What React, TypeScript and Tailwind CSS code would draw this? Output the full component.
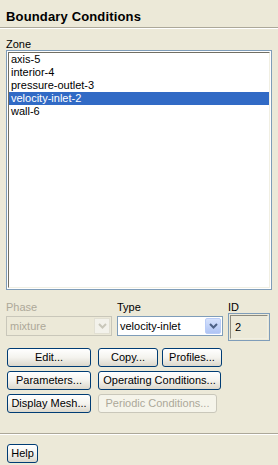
import React from "react";

const zones = ["axis-5", "interior-4", "pressure-outlet-3", "velocity-inlet-2", "wall-6"];

function Chevron({ disabled }: { disabled?: boolean }) {
  return (
    <svg width="9" height="6" viewBox="0 0 9 6">
      <path
        d="M1 1 L4.5 4.5 L8 1"
        fill="none"
        stroke={disabled ? "#C9C7BA" : "#4D6185"}
        strokeWidth="2"
      />
    </svg>
  );
}

function XpButton({ label, w, disabled, className }: { label: string; w: string; disabled?: boolean; className?: string }) {
  return (
    <div
      className={
        "h-[19px] rounded-[3px] border flex items-center justify-center text-[11px] leading-[13px] " +
        w +
        " " +
        (disabled
          ? "border-[#C9C7BA] bg-[#F5F4EA] text-[#ACA899]"
          : "border-[#003C74] bg-linear-to-b from-white via-[#F4F3EE] to-[#DCD8CC] text-black") +
        " " +
        (className ?? "")
      }
    >
      {label}
    </div>
  );
}

export default function App() {
  return (
    <div
      className="w-[278px] h-[465px] bg-[#ECE9D8] flex flex-col overflow-hidden"
      style={{ fontFamily: '"Liberation Sans", Arial, sans-serif' }}
    >
      {/* Header */}
      <div className="pl-[6px] pt-[9px] text-[13px] leading-[16px] font-bold tracking-[0.15px] text-black">Boundary Conditions</div>
      <div className="mt-[2px] h-[2px] border-t border-b border-t-[#ACA899] border-b-white" />

      {/* Zone list */}
      <div className="mt-[9px] pl-[6px] text-[11px] leading-[12px] text-black">Zone</div>
      <div className="ml-[6px] w-[266px] h-[240px] border border-[#7F9DB9] bg-white p-px">
        <div className="h-full border border-t-[#716F64] border-l-[#716F64] border-b-[#F1EFE2] border-r-[#F1EFE2] bg-white">
          {zones.map((z) => (
            <div
              key={z}
              className={
                "h-[13px] pl-[2px] text-[11px] leading-[13px] whitespace-nowrap " +
                (z === "velocity-inlet-2" ? "bg-[#316AC5] text-white" : "text-black")
              }
            >
              {z}
            </div>
          ))}
        </div>
      </div>

      {/* Phase / Type / ID */}
      <div className="mt-[11px] pl-[6px] flex gap-[5px] text-[11px]">
        <div className="w-[106px] flex flex-col">
          <div className="leading-[13px] text-[#ACA899]">Phase</div>
          <div className="mt-[2px] h-[20px] border border-[#C9C7BA] bg-[#ECE9D8] flex items-center">
            <span className="flex-1 pl-[3px] leading-[13px] text-[#ACA899]">mixture</span>
            <div className="w-[16px] h-[16px] mr-px border border-[#E2E0D3] bg-[#F3F2EB] flex items-center justify-center">
              <Chevron disabled />
            </div>
          </div>
        </div>
        <div className="w-[106px] flex flex-col">
          <div className="leading-[13px] text-black">Type</div>
          <div className="mt-[2px] h-[20px] border border-[#7F9DB9] bg-white flex items-center">
            <span className="flex-1 pl-[2px] leading-[13px] text-black">velocity-inlet</span>
            <div className="w-[16px] h-[16px] mr-px rounded-[2px] border border-[#B9CCF7] bg-linear-to-b from-[#D6E2FC] to-[#AFC4F4] flex items-center justify-center">
              <Chevron />
            </div>
          </div>
        </div>
        <div className="w-[42px] flex flex-col">
          <div className="leading-[12px] text-black">ID</div>
          <div className="h-[28px] border border-[#7F9DB9] p-px">
            <div className="h-full border border-t-[#8C8A7E] border-l-[#8C8A7E] border-b-[#F1EFE2] border-r-[#F1EFE2] bg-[#ECE9D8] pl-[4px] pt-[5px] leading-[13px] text-black">
              2
            </div>
          </div>
        </div>
      </div>

      {/* Buttons */}
      <div className="mt-[7px] pl-[7px] flex flex-col gap-[4px]">
        <div className="flex">
          <XpButton label="Edit..." w="w-[84px]" />
          <XpButton label="Copy..." w="w-[60px]" className="ml-[7px]" />
          <XpButton label="Profiles..." w="w-[60px]" className="ml-[4px]" />
        </div>
        <div className="flex">
          <XpButton label="Parameters..." w="w-[84px]" />
          <XpButton label="Operating Conditions..." w="w-[123px]" className="ml-[7px]" />
        </div>
        <div className="flex">
          <XpButton label="Display Mesh..." w="w-[84px]" />
          <XpButton label="Periodic Conditions..." w="w-[119px]" className="ml-[7px]" disabled />
        </div>
      </div>

      <div className="mt-[20px] h-[2px] border-t border-b border-t-[#ACA899] border-b-white" />
      <div className="mt-[9px] pl-[7px]">
        <XpButton label="Help" w="w-[31px]" />
      </div>
    </div>
  );
}
